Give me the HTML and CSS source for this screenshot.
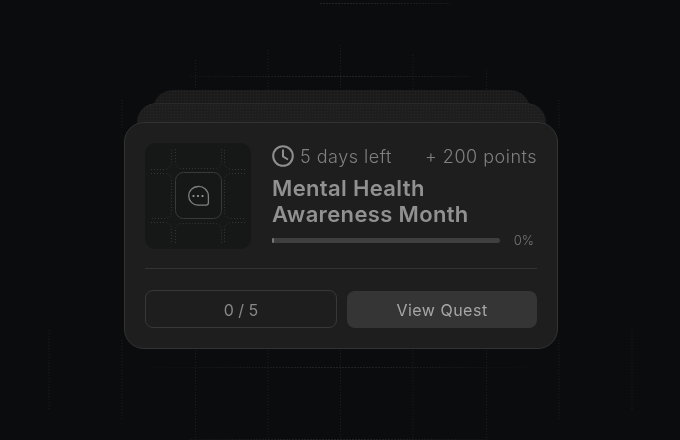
FILE: index.html
```html
<!DOCTYPE html>
<html lang="en">

<head>
    <meta charset="UTF-8">
    <meta name="viewport" content="width=device-width, initial-scale=1.0">
    <title>Quest Card</title>
    <link rel="stylesheet" href="styles.css">
</head>

<body>
    <svg class="grid-lines" width="680" height="440" viewBox="0 0 680 440" aria-hidden="true">
        <defs>
            <linearGradient id="fadeX" x1="0" y1="0" x2="680" y2="0" gradientUnits="userSpaceOnUse">
                <stop offset="0.2" stop-color="#242626" stop-opacity="0" />
                <stop offset="0.5" stop-color="#242626" />
                <stop offset="0.8" stop-color="#242626" stop-opacity="0" />
            </linearGradient>
        </defs>
        <g class="grid-v">
            <path d="M49 330V410" />
            <path d="M122 100V130M122 340V420" />
            <path d="M195.500 60V120M195.500 350V440" />
            <path d="M268 50V120M268 350V440" />
            <path d="M340.500 45V120M340.500 350V440" />
            <path d="M413 55V120M413 350V440" />
            <path d="M486.500 70V120M486.500 350V440" />
            <path d="M559 100V130M559 340V420" />
            <path d="M632 330V410" />
        </g>
        <g class="grid-h" stroke="url(#fadeX)">
            <path d="M150 367.500H540" />
            <path d="M190 76.500H470" />
            <path d="M320 3.500H450" />
            <path d="M190 439.500H490" />
        </g>
    </svg>

    <div class="stack">
        <div class="back-card back-card-far"></div>
        <div class="back-card back-card-near"></div>

        <div class="card">
            <div class="card-top">
                <div class="thumb">
                    <svg width="106" height="106" viewBox="0 0 106 106" fill="none">
                        <g class="thumb-cells">
                            <path d="M6 26.500H19Q26.500 26.500 26.500 19V6" />
                            <path d="M100 26.500H87Q79.500 26.500 79.500 19V6" />
                            <path d="M6 79.500H19Q26.500 79.500 26.500 86V100" />
                            <path d="M100 79.500H87Q79.500 79.500 79.500 86V100" />
                            <path d="M30.500 6V18Q30.500 25.500 37 25.500H69Q76.500 25.500 76.500 18V6" />
                            <path d="M30.500 100V87Q30.500 80.500 37 80.500H69Q76.500 80.500 76.500 87V100" />
                            <path d="M6 30.500H19Q26.500 30.500 26.500 37V68Q26.500 75.500 19 75.500H6" />
                            <path d="M100 30.500H87Q79.500 30.500 79.500 37V68Q79.500 75.500 87 75.500H100" />
                        </g>
                        <rect class="thumb-box" x="30.500" y="29.500" width="46" height="46" rx="8" />
                        <path class="thumb-bubble" d="M53 43.500a9.300 9.300 0 0 0 0 18.600h8a2.400 2.400 0 0 0 2.400-2.400v-6.500a9.700 9.700 0 0 0-10.400-9.700z" />
                        <circle class="thumb-dot" cx="48.500" cy="53" r="1.100" />
                        <circle class="thumb-dot" cx="53" cy="53" r="1.100" />
                        <circle class="thumb-dot" cx="57.500" cy="53" r="1.100" />
                    </svg>
                </div>
                <div class="info">
                    <div class="meta">
                        <span class="days">
                            <svg width="22" height="22" viewBox="0 0 22 22" fill="none">
                                <circle cx="11" cy="11" r="9.800" />
                                <path d="M11 4.500V11.500L16 14.500" />
                            </svg>
                            5 days left
                        </span>
                        <span>+ 200 points</span>
                    </div>
                    <h1 class="title">Mental Health<br>Awareness Month</h1>
                    <div class="progress">
                        <div class="progress-track">
                            <div class="progress-fill"></div>
                        </div>
                        <span class="progress-label">0%</span>
                    </div>
                </div>
            </div>
            <div class="divider"></div>
            <div class="actions">
                <div class="count">0 / 5</div>
                <button class="view-btn" type="button">View Quest</button>
            </div>
        </div>
    </div>
</body>

</html>
```

FILE: styles.css
```css
/* Resetting Default Styles */
* {
    margin: 0;
    padding: 0;
    box-sizing: border-box;
}

body {
    font-family: Inter, "Liberation Sans", sans-serif;
    background-color: #0b0c0e;
    color: #8a8a8a;
    width: 680px;
    height: 440px;
    overflow: hidden;
    position: relative;
    padding-top: 122px;
}

/* Faint grid behind the cards */
.grid-lines {
    position: absolute;
    top: 0;
    left: 0;
}

.grid-v path {
    stroke: #1d1f1f;
    stroke-width: 1;
    stroke-dasharray: 1 2;
}

.grid-h path {
    stroke-width: 1;
    stroke-dasharray: 2 1;
}

/* Card stack */
.stack {
    position: relative;
    width: 434px;
    margin-left: 124px;
}

.back-card {
    position: absolute;
    height: 60px;
    border-radius: 20px 20px 0 0;
    background-color: #1b1b1b;
    background-image: radial-gradient(#272727 0.7px, transparent 0.8px);
    background-size: 3px 3px;
}

.back-card-far {
    top: -32px;
    left: 29px;
    width: 377px;
}

.back-card-near {
    top: -19px;
    left: 13px;
    width: 409px;
    background-color: #1e1e1e;
    border-top: 1px solid #292929;
}

.card {
    position: relative;
    height: 227px;
    padding: 20px;
    background-color: #1e1e1e;
    background-image:
        radial-gradient(#2c2c2c 0.6px, transparent 0.7px),
        radial-gradient(#2c2c2c 0.6px, transparent 0.7px);
    background-size: 8px 8px;
    background-position: 0 0, 4px 4px;
    border: 1px solid #333333;
    border-radius: 20px;
    will-change: transform;
}

.card-top {
    display: flex;
    gap: 21px;
}

/* Icon tile */
.thumb {
    width: 106px;
    height: 106px;
    flex-shrink: 0;
    background-color: #161717;
    border-radius: 10px;
}

.thumb svg {
    display: block;
}

.thumb-cells path {
    stroke: #353736;
    stroke-width: 1;
    stroke-dasharray: 1 2;
}

.thumb-box {
    stroke: #383939;
    fill: #161717;
}

.thumb-bubble {
    stroke: #808080;
    stroke-width: 1.300;
}

.thumb-dot {
    fill: #a0a0a0;
}

/* Right column */
.info {
    flex: 1;
    min-width: 0;
}

.meta {
    display: flex;
    justify-content: space-between;
    align-items: center;
    height: 26px;
    font-size: 18px;
    font-weight: 300;
    letter-spacing: 0.5px;
    color: #808080;
}

.days {
    display: flex;
    align-items: center;
    gap: 6px;
}

.days svg {
    stroke: #8f8f8f;
    stroke-width: 2;
}

.title {
    margin-top: 6px;
    font-size: 22px;
    font-weight: 600;
    line-height: 26px;
    letter-spacing: 0.35px;
    color: #919191;
}

.progress {
    display: flex;
    align-items: center;
    justify-content: space-between;
    margin-top: 5px;
    height: 16px;
}

.progress-track {
    width: 228px;
    height: 5px;
    border-radius: 3px;
    background-color: #3f3f3f;
}

.progress-fill {
    width: 2px;
    height: 5px;
    border-radius: 3px;
    background-color: #777777;
}

.progress-label {
    font-size: 13px;
    font-weight: 300;
    color: #777777;
    margin-right: 3px;
}

.divider {
    height: 1px;
    margin-top: 19px;
    background-color: #333333;
}

/* Bottom row */
.actions {
    display: flex;
    align-items: flex-end;
    gap: 10px;
    margin-top: 21px;
}

.count,
.view-btn {
    flex: 1;
    display: flex;
    align-items: center;
    justify-content: center;
    border-radius: 8px;
    font-family: inherit;
    font-size: 16px;
}

.count {
    height: 38px;
    padding-top: 1px;
    border: 1px solid #383838;
    color: #888888;
}

.view-btn {
    height: 37px;
    border: none;
    background-color: #353535;
    color: #a6a6a6;
    letter-spacing: 0.5px;
}
```
